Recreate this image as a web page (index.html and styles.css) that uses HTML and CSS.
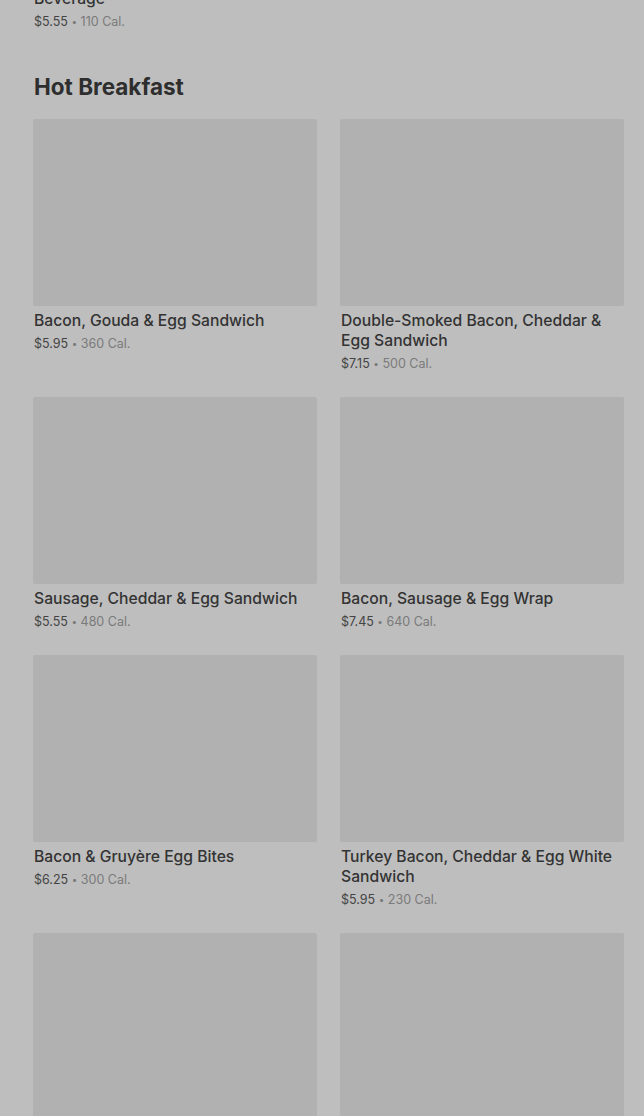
FILE: index.html
```html
<!DOCTYPE html>
<html lang="en">
<head>
    <meta charset="UTF-8">
    <title>Hot Breakfast</title>
    <link rel="stylesheet" href="styles.css">
</head>
<body>
    <div id="menu">
        <!-- tail of the previous section -->
        <div class="item item-tail">
            <div class="item-name">Beverage</div>
            <div class="item-meta"><span class="price">$5.55</span> <span class="dot">•</span> <span class="cal">110 Cal.</span></div>
        </div>

        <h2 class="section-title">Hot Breakfast</h2>

        <div class="grid">
            <div class="item">
                <div class="thumb"></div>
                <div class="item-name">Bacon, Gouda &amp; Egg Sandwich</div>
                <div class="item-meta"><span class="price">$5.95</span> <span class="dot">•</span> <span class="cal">360 Cal.</span></div>
            </div>
            <div class="item">
                <div class="thumb"></div>
                <div class="item-name">Double-Smoked Bacon, Cheddar &amp; Egg Sandwich</div>
                <div class="item-meta"><span class="price">$7.15</span> <span class="dot">•</span> <span class="cal">500 Cal.</span></div>
            </div>
            <div class="item">
                <div class="thumb"></div>
                <div class="item-name">Sausage, Cheddar &amp; Egg Sandwich</div>
                <div class="item-meta"><span class="price">$5.55</span> <span class="dot">•</span> <span class="cal">480 Cal.</span></div>
            </div>
            <div class="item">
                <div class="thumb"></div>
                <div class="item-name">Bacon, Sausage &amp; Egg Wrap</div>
                <div class="item-meta"><span class="price">$7.45</span> <span class="dot">•</span> <span class="cal">640 Cal.</span></div>
            </div>
            <div class="item">
                <div class="thumb"></div>
                <div class="item-name">Bacon &amp; Gruyère Egg Bites</div>
                <div class="item-meta"><span class="price">$6.25</span> <span class="dot">•</span> <span class="cal">300 Cal.</span></div>
            </div>
            <div class="item">
                <div class="thumb"></div>
                <div class="item-name">Turkey Bacon, Cheddar &amp; Egg White Sandwich</div>
                <div class="item-meta"><span class="price">$5.95</span> <span class="dot">•</span> <span class="cal">230 Cal.</span></div>
            </div>
            <div class="item">
                <div class="thumb"></div>
            </div>
            <div class="item">
                <div class="thumb"></div>
            </div>
        </div>
    </div>
</body>
</html>
```

FILE: styles.css
```css
html, body {
    margin: 0;
    height: 100%;
    overflow: hidden;
}
body {
    font-family: Inter, Roboto, "Liberation Sans", sans-serif;
    background-color: #bebebe;
    color: #303030;
}
#menu {
    margin-top: -11px;
    padding: 0 20px 0 34px;
}
.section-title {
    margin: 40px 0 16px;
    font-size: 22.5px;
    line-height: 32px;
    font-weight: 700;
    letter-spacing: 0;
    color: #2e2e2e;
}
.grid {
    display: grid;
    grid-template-columns: 1fr 1fr;
    column-gap: 24px;
    row-gap: 24px;
}
.thumb {
    height: 187px;
    margin-left: -1px;
    background-color: #b1b1b1;
    border-radius: 2px;
    margin-bottom: 5px;
}
.item-name {
    font-size: 15.7px;
    line-height: 20px;
    font-weight: 500;
    color: #333;
}
.item-meta {
    margin-top: 4px;
    font-size: 12.5px;
    line-height: 18px;
    color: #7a7a7a;
}
.price {
    color: #444;
}
.dot {
    font-size: 10px;
    line-height: 0;
    vertical-align: 1px;
}
```
